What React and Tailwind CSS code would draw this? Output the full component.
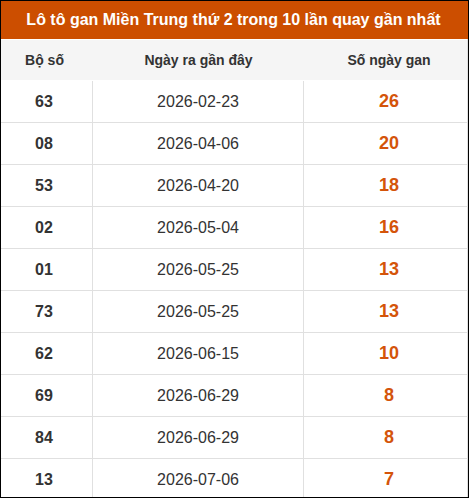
// Lô tô gan table: orange title bar, column header row and rows of numbers
import React from 'react';

const rows = [
  { so: '63', ngay: '2026-02-23', gan: 26 },
  { so: '08', ngay: '2026-04-06', gan: 20 },
  { so: '53', ngay: '2026-04-20', gan: 18 },
  { so: '02', ngay: '2026-05-04', gan: 16 },
  { so: '01', ngay: '2026-05-25', gan: 13 },
  { so: '73', ngay: '2026-05-25', gan: 13 },
  { so: '62', ngay: '2026-06-15', gan: 10 },
  { so: '69', ngay: '2026-06-29', gan: 8 },
  { so: '84', ngay: '2026-06-29', gan: 8 },
  { so: '13', ngay: '2026-07-06', gan: 7 },
];

const App = () => {
  return (
    <div className="w-[469px] h-[498px] border border-black overflow-hidden bg-white font-['Liberation_Sans',Arial,sans-serif]">
      {/* Title */}
      <div className="h-[38px] bg-[#cc4e00] text-white font-bold text-[16px] flex items-center justify-center pr-[2px]">
        Lô tô gan Miền Trung thứ 2 trong 10 lần quay gần nhất
      </div>

      <div className="border-r border-[#e0e0e0]">
        {/* Column headers */}
        <div className="grid grid-cols-[92px_211px_1fr] h-[42px] bg-[#f5f5f5] border-t border-white border-b border-[#e0e0e0] text-[14px] font-bold text-[#333]">
          <div className="flex items-center justify-center pr-[5px]">Bộ số</div>
          <div className="flex items-center justify-center">Ngày ra gần đây</div>
          <div className="flex items-center justify-center pl-[7px]">Số ngày gan</div>
        </div>

        {/* Rows */}
        {rows.map((r, i) => (
          <div key={i} className="grid grid-cols-[92px_211px_1fr] h-[42px] border-b border-[#e0e0e0]">
            <div className="flex items-center justify-center pr-[5px] border-r border-[#e0e0e0] text-[16px] font-bold text-[#333]">
              {r.so}
            </div>
            <div className="flex items-center justify-center border-r border-[#e0e0e0] text-[16px] text-[#333]">
              {r.ngay}
            </div>
            <div className="flex items-center justify-center pl-[7px] text-[18px] font-bold text-[#d4540a]">
              {r.gan}
            </div>
          </div>
        ))}
      </div>
    </div>
  );
};

export default App;
